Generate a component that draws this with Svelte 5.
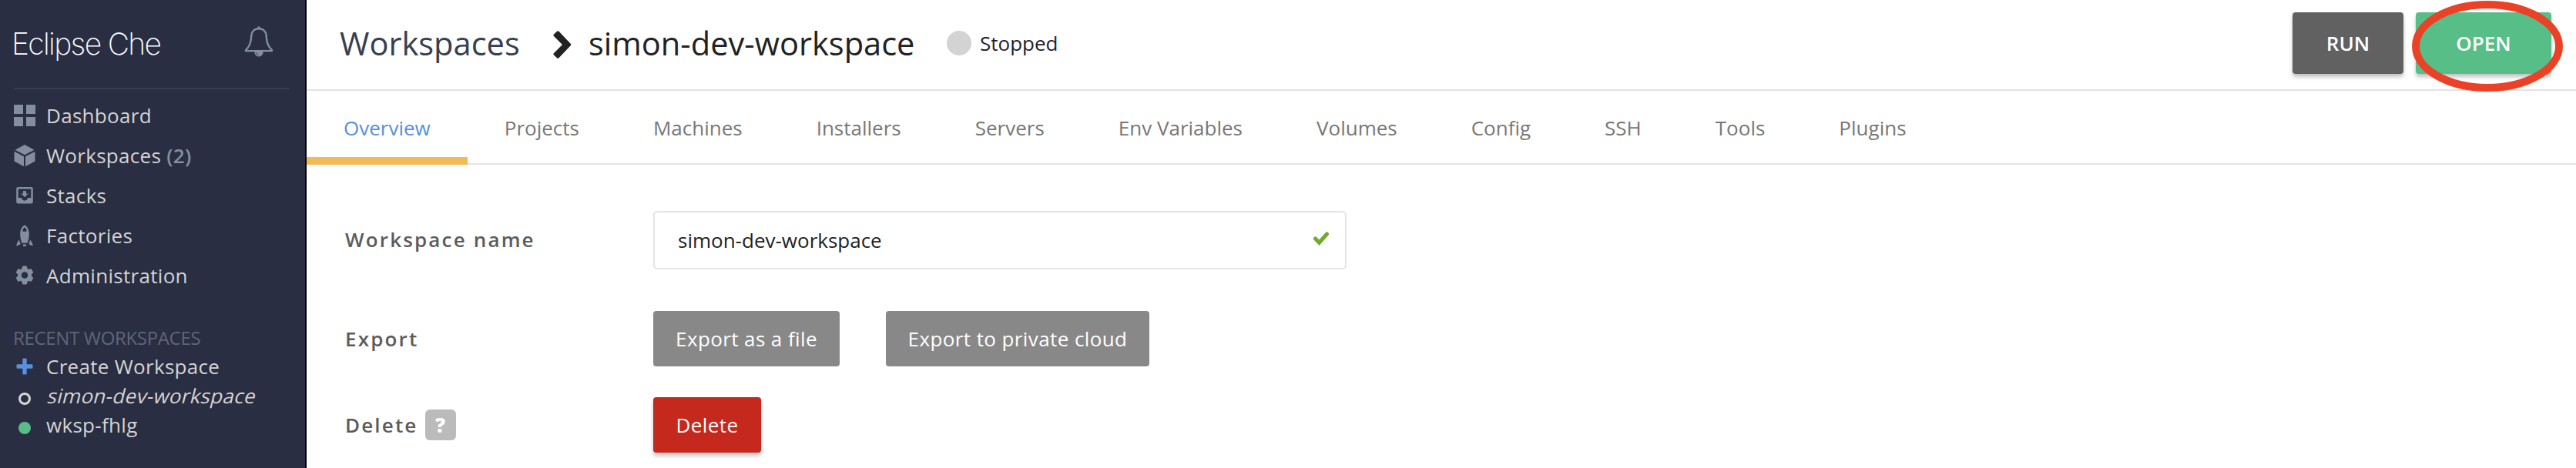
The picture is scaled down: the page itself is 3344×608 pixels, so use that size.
<script>
  const tabs = ['Overview', 'Projects', 'Machines', 'Installers', 'Servers', 'Env Variables', 'Volumes', 'Config', 'SSH', 'Tools', 'Plugins'];
</script>

<div class="app">
  <aside>
    <div class="brand">
      <span class="logo">Eclipse Che</span>
      <svg class="bell" width="38" height="42" viewBox="0 0 38 42" fill="none" stroke="#848e9e" stroke-width="2.4" stroke-linecap="round" stroke-linejoin="round">
        <path d="M19 4.300c-6 0-9.600 4-9.800 10.200C9 22 7.500 27 2 32.200v.9h34v-.9C30.500 27 29 22 28.800 14.500 28.600 8.300 25 4.300 19 4.300z" />
        <circle cx="19" cy="3" r="1.700" fill="#848e9e" stroke="none" />
        <path d="M13.300 34a5.700 6.600 0 0 0 11.400 0z" fill="#848e9e" stroke="none" />
        <path d="M15.500 35.400a3.600 3.600 0 0 0 2.600 3" stroke="#292e42" stroke-width=".8" />
      </svg>
    </div>
    <nav class="menu">
      <div class="item"><svg width="28" height="28" viewBox="0 0 28 28"><path d="M0 0h12v12H0zM16 0h12v12H16zM0 16h12v12H0zM16 16h12v12H16z" /></svg><span>Dashboard</span></div>
      <div class="item"><svg width="28" height="28" viewBox="0 0 28 28"><path d="M14 0l12.500 6.700L14 13.200 1.500 6.700zM.5 8.700l12.500 6.500v13L.5 21.500zM27.500 8.700L15 15.200v13l12.500-6.700z" /></svg><span>Workspaces <b>(2)</b></span></div>
      <div class="item"><svg width="28" height="28" viewBox="0 0 28 28"><path fill-rule="evenodd" d="M5.500 3h17a2.300 2.300 0 0 1 2.300 2.300v17a2.300 2.300 0 0 1-2.300 2.300h-17a2.300 2.300 0 0 1-2.300-2.300v-17A2.300 2.300 0 0 1 5.500 3zM5.700 5.500v11.600H10c.5 2.200 2 3.600 4 3.600s3.500-1.400 4-3.600h4.300V5.500zM12 8h4v3.500h2.600L14 16.300 9.400 11.500H12z" /></svg><span>Stacks</span></div>
      <div class="item"><svg width="28" height="28" viewBox="0 0 28 28"><path fill-rule="evenodd" d="M14 .3c3.700 2.400 5.800 6.500 5.800 11.200 0 4.700-.8 9-2.300 12.300h-7C9 20.500 8.200 16.200 8.200 11.500 8.200 6.800 10.300 2.700 14 .3zM14 3.300c-1.600 1.300-2.500 3-2.700 5 1.600.7 3.800.7 5.400 0-.2-2-1.100-3.700-2.700-5zM12 25.500h4v2.500h-4zM6.700 19.500l2 5.800-5.300 2.500c.1-2.300.5-4 1.300-5zM21.300 19.500l-2 5.800 5.300 2.500c-.1-2.300-.5-4-1.300-5z" /></svg><span>Factories</span></div>
      <div class="item"><svg width="28" height="28" viewBox="0 0 28 28"><path fill-rule="evenodd" stroke="#848e9e" stroke-width="1" stroke-linejoin="round" d="M11.600 2h4.800l.9 3.500 1.900 1.100 3.200-1 2.400 4.300-2.300 2.500v2.200l2.300 2.500-2.400 4.300-3.200-1-1.900 1.100-.9 3.500h-4.800l-.9-3.500-1.900-1.100-3.200 1-2.400-4.300 2.300-2.500v-2.200l-2.300-2.500 2.400-4.300 3.200 1 1.900-1.100zM14 8.800a4.700 4.700 0 1 0 0 9.400 4.700 4.700 0 0 0 0-9.400z" /></svg><span>Administration</span></div>
    </nav>
    <div class="recent">
      <h2>RECENT WORKSPACES</h2>
      <div class="item"><svg width="28" height="22" viewBox="0 0 28 22"><path fill="#5990de" d="M12.500.5h3a1.200 1.200 0 0 1 1.200 1.200v6.600h6.600a1.200 1.200 0 0 1 1.200 1.200v3a1.200 1.200 0 0 1-1.200 1.200h-6.600v6.600a1.200 1.200 0 0 1-1.200 1.200h-3a1.200 1.200 0 0 1-1.200-1.200v-6.600H4.700a1.200 1.200 0 0 1-1.200-1.200v-3a1.200 1.200 0 0 1 1.200-1.200h6.600V1.700A1.200 1.200 0 0 1 12.500.5z" /></svg><span>Create Workspace</span></div>
      <div class="item"><i class="state"></i><span class="slanted">simon-dev-workspace</span></div>
      <div class="item"><i class="state on"></i><span>wksp-fhlg</span></div>
    </div>
  </aside>
  <main>
    <header>
      <span class="crumb">Workspaces</span>
      <svg class="chev" width="24" height="36" viewBox="0 0 24 36"><path fill="#222" d="M1 4.600L5 .8a1.800 1.800 0 0 1 2.500 0l15.200 15.900a1.800 1.800 0 0 1 0 2.600L7.500 35.200a1.800 1.800 0 0 1-2.500 0L1 31.400a1.600 1.600 0 0 1 0-2.300L12 18 1 6.900a1.600 1.600 0 0 1 0-2.300z" /></svg>
      <span class="title">simon-dev-workspace</span>
      <i class="dot"></i>
      <span class="status">Stopped</span>
      <button class="run">RUN</button>
      <div class="open-wrap">
        <button class="open">OPEN</button>
        <svg class="ring" width="198" height="120" viewBox="0 0 198 120"><ellipse cx="99" cy="60" rx="93" ry="54" fill="none" stroke="#eb4126" stroke-width="10" /></svg>
      </div>
    </header>
    <div class="tabs">
      {#each tabs as tab, i}
        <div class="tab" class:active={i === 0}>{tab}</div>
      {/each}
    </div>
    <section>
      <div class="row name">
        <div class="label">Workspace name</div>
        <div class="input">
          <span>simon-dev-workspace</span>
          <svg width="22" height="18" viewBox="0 0 22 18"><path d="M3.500 9l5 5.200L18.500 3" fill="none" stroke="#72a92f" stroke-width="5" stroke-linecap="round" /></svg>
        </div>
      </div>
      <div class="row export">
        <div class="label">Export</div>
        <button class="file">Export as a file</button>
        <button class="cloud">Export to private cloud</button>
      </div>
      <div class="row">
        <div class="label">Delete<span class="help">?</span></div>
        <button class="del">Delete</button>
      </div>
    </section>
  </main>
</div>

<style>
  :global(body) { margin: 0; background: #fff; }
  .app { display: flex; height: 608px; overflow: hidden; font: 26px/38px "Open Sans", sans-serif; }
  aside { box-sizing: border-box; width: 398px; height: 608px; flex: none; background: #292e42; border-right: 2px solid #000; color: #d4d4d4; }
  .brand { display: flex; justify-content: space-between; box-sizing: border-box; height: 116px; margin: 0 20px 0 18px; border-bottom: 2px solid #343e5b; }
  .logo { margin-left: -3px; padding-top: 29px; font: 200 39px/56px Inter, sans-serif; letter-spacing: -1.660px; color: #fff; white-space: nowrap; }
  .bell { margin: 33px 21px 0 0; }
  .menu { padding-top: 8px; }
  .item { display: flex; align-items: center; height: 52px; padding-left: 18px; letter-spacing: .3px; white-space: nowrap; }
  .item svg { fill: #848e9e; width: 28px; margin-right: 14px; flex: none; }
  b { color: #848e9e; font-weight: 600; }
  .recent { padding-top: 36px; }
  h2 { margin: 0; padding-left: 17px; font-size: 24px; font-weight: 400; line-height: 37px; letter-spacing: -.33px; color: #5f657a; white-space: nowrap; }
  .recent .item { height: 38px; }
  .slanted { display: inline-block; transform: skewX(-14deg); transform-origin: 0 29px; }
  .state { box-sizing: border-box; flex: none; width: 16px; height: 16px; margin: 7px 20px 0 6px; border: 3px solid #d4d4d4; border-radius: 50%; }
  .state.on { background: #57be87; border: 0; }
  main { flex: 1; min-width: 0; }
  header { display: flex; align-items: center; box-sizing: border-box; height: 118px; padding: 0 32px 4px 43px; border-bottom: 2px solid #e4e4e4; font-size: 41.600px; white-space: nowrap; }
  .crumb { color: #373f52; width: 277px; }
  .chev { margin: 4px 22px 0 0; }
  .title { color: #222; width: 465px; }
  .dot { width: 32px; height: 32px; border-radius: 50%; background: #d3d3d3; }
  .status { font-size: 26px; color: #1d2230; margin-left: 11px; }
  button { border: 0; padding: 0; border-radius: 4px; color: #fff; font: 26px/38px "Open Sans", sans-serif; height: 72px; letter-spacing: .4px; white-space: nowrap; }
  header button { height: 80px; font-weight: 600; letter-spacing: 0; box-shadow: 0 4px 5px rgba(0, 0, 0, .24); }
  .run { width: 144px; background: #616161; margin-left: auto; }
  .open-wrap { position: relative; margin-left: 16px; display: flex; }
  .open { width: 176px; background: #57be87; }
  .ring { position: absolute; left: -6px; top: -16px; }
  .tabs { display: flex; box-sizing: border-box; height: 96px; border-bottom: 2px solid #e4e4e4; color: #777; }
  .tab { box-sizing: border-box; height: 96px; padding: 29px 48px 0; white-space: nowrap; }
  .tab.active { color: #5490e3; border-bottom: 10px solid #f2ba57; }
  section { padding: 60px 0 0 50px; }
  .row { display: flex; align-items: center; height: 72px; }
  .label { display: flex; align-items: center; width: 400px; font-weight: 600; color: #5c5c5c; letter-spacing: 2.160px; }
  .name { height: 76px; margin-bottom: 54px; }
  .name .label { padding-bottom: 3px; box-sizing: border-box; }
  .export { margin-bottom: 40px; }
  .input { display: flex; align-items: center; justify-content: space-between; box-sizing: border-box; width: 900px; height: 76px; border: 2px solid #e4e4e4; border-radius: 5px; padding: 0 20px 0 30px; color: #222; }
  .input svg { margin-bottom: 4px; }
  .file { width: 242px; background: #888; margin-right: 60px; }
  .cloud { width: 342px; background: #888; }
  .del { width: 140px; background: #c5281c; box-shadow: 0 4px 5px rgba(0, 0, 0, .24); }
  .help { width: 40px; height: 40px; border-radius: 6px; background: #bbb; color: #fff; font-weight: 800; line-height: 40px; text-align: center; letter-spacing: 0; margin-left: 9px; }
</style>
